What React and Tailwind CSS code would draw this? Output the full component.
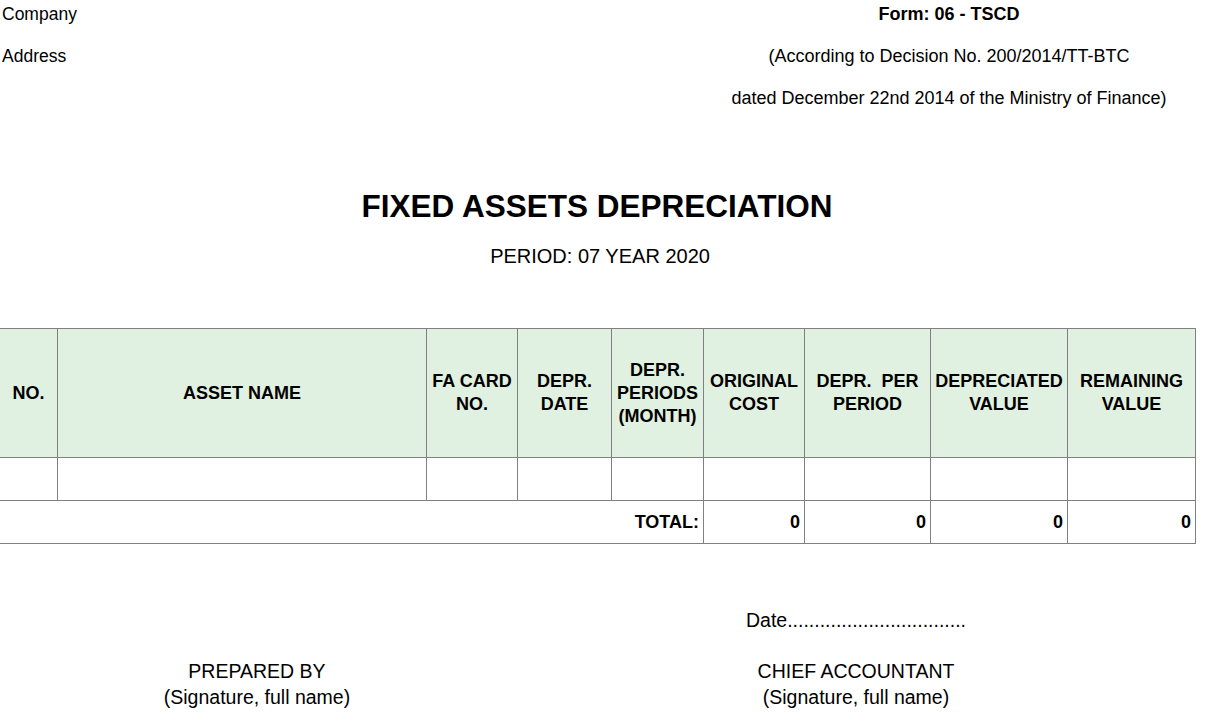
const headers = [
  ['NO.'],
  ['ASSET NAME'],
  ['FA CARD', 'NO.'],
  ['DEPR.', 'DATE'],
  ['DEPR.', 'PERIODS', '(MONTH)'],
  ['ORIGINAL', 'COST'],
  ['DEPR.\u00a0 PER', 'PERIOD'],
  ['DEPRECIATED', 'VALUE'],
  ['REMAINING', 'VALUE'],
]

const font = { fontFamily: '"Liberation Sans", Arial, sans-serif' }

export default function App() {
  return (
    <div className="min-h-screen w-[1206px] bg-white text-black" style={font}>
      {/* top header */}
      <div className="flex">
        <div className="flex w-[692px] flex-col gap-[14px] pl-[2px] text-[17.5px] leading-[28px]">
          <div>Company</div>
          <div>Address</div>
        </div>
        <div className="flex w-[514px] flex-col items-center gap-[14px] text-[18px] leading-[28px]">
          <div className="font-bold">Form: 06 - TSCD</div>
          <div>(According to Decision No. 200/2014/TT-BTC</div>
          <div>dated December 22nd 2014 of the Ministry of Finance)</div>
        </div>
      </div>

      {/* title */}
      <div className="mt-[74px] flex w-[1194px] flex-col items-center">
        <h1 className="text-[31.5px] font-bold leading-[40px]">FIXED ASSETS DEPRECIATION</h1>
        <div className="mt-[16px] pl-[6px] text-[20px] leading-[28px]">PERIOD: 07 YEAR 2020</div>
      </div>

      {/* table */}
      <div className="mt-[58px] grid w-[1196px] grid-cols-[58px_369px_91px_94px_92px_101px_126px_137px_128px] border-t border-[#808080] text-[18px] font-bold">
        {headers.map((lines, i) => (
          <div
            key={i}
            className="flex h-[129px] flex-col items-center justify-center border-r border-b border-[#808080] bg-[#e1f1e1] text-center leading-[23px]"
          >
            {lines.map((l) => (
              <div key={l} className="whitespace-nowrap">{l}</div>
            ))}
          </div>
        ))}
        {headers.map((_, i) => (
          <div key={i} className="h-[43px] border-r border-b border-[#808080]" />
        ))}
        <div className="col-span-5 flex h-[43px] items-center justify-end border-r border-b border-[#808080] pr-[4px]">
          TOTAL:
        </div>
        {[0, 1, 2, 3].map((i) => (
          <div
            key={i}
            className="flex h-[43px] items-center justify-end border-r border-b border-[#808080] pr-[4px]"
          >
            0
          </div>
        ))}
      </div>

      {/* signatures */}
      <div className="mt-[62px] grid grid-cols-[514px_684px] text-[19.5px]">
        <div />
        <div className="text-center leading-[28px]">Date.................................</div>
        <div className="mt-[24px] flex flex-col items-center leading-[26px]">
          <div>PREPARED BY</div>
          <div>(Signature, full name)</div>
        </div>
        <div className="mt-[24px] flex flex-col items-center leading-[26px]">
          <div>CHIEF ACCOUNTANT</div>
          <div>(Signature, full name)</div>
        </div>
      </div>
    </div>
  )
}
